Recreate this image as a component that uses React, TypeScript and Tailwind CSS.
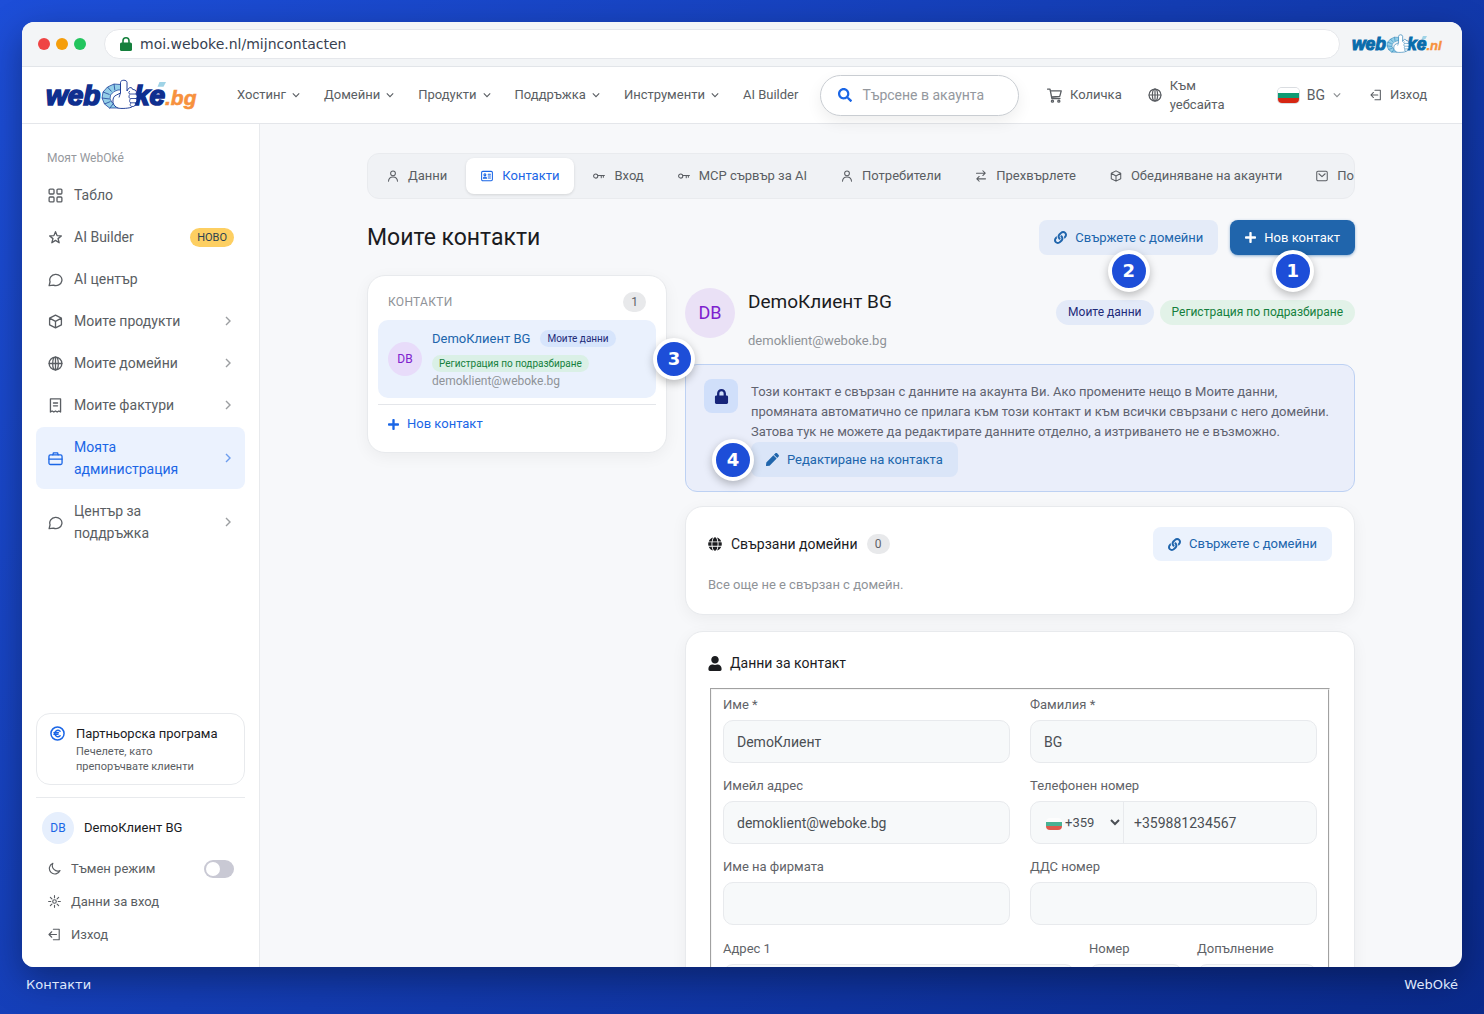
import React from 'react';
import { FaGlobe, FaLink, FaLock, FaPen, FaPlus, FaSearch, FaUser } from 'react-icons/fa';

type IconName =
  | 'grid' | 'star' | 'chat' | 'cube' | 'globe' | 'receipt' | 'briefcase'
  | 'user' | 'card' | 'key' | 'swap' | 'mail' | 'cart' | 'logout' | 'moon' | 'sun' | 'euro';

const shapes: Record<IconName, React.ReactNode> = {
  grid: (
    <>
      <rect x="1.2" y="1.2" width="5.2" height="5.2" rx="1" />
      <rect x="9.6" y="1.2" width="5.2" height="5.2" rx="1" />
      <rect x="1.2" y="9.6" width="5.2" height="5.2" rx="1" />
      <rect x="9.6" y="9.6" width="5.2" height="5.2" rx="1" />
    </>
  ),
  star: <path d="M8 1.8l1.7 4.2 4.5.3-3.5 2.9 1.2 4.4L8 11.1l-3.9 2.5 1.2-4.4L1.8 6.3 6.3 6z" />,
  chat: <path d="M1.2 14.6l1-4.2A6.5 6 0 1 1 5.8 14z" />,
  cube: <path d="M8 1.2l6.3 3.2v7.2L8 14.8l-6.3-3.2V4.4zM1.7 4.4L8 7.9l6.3-3.5M8 7.9v6.9" />,
  globe: (
    <>
      <circle cx="8" cy="8" r="6.8" />
      <ellipse cx="8" cy="8" rx="3" ry="6.8" />
      <path d="M1.2 8h13.6M8 1.2v13.6" />
    </>
  ),
  receipt: <path d="M2.6 1h10.8v14l-1.8-1.2L9.8 15 8 13.8 6.2 15l-1.8-1.2L2.6 15zM5.8 5.3h4.4M5.8 8.3h4.4" />,
  briefcase: (
    <>
      <rect x="1" y="4.2" width="14" height="10.2" rx="1.6" />
      <path d="M5.2 4.1l.6-2.2h4.4l.6 2.2M1 8.6h14" />
    </>
  ),
  user: (
    <>
      <circle cx="8" cy="4.4" r="3.2" />
      <path d="M2 15c.2-3.8 2.4-5.8 6-5.8s5.8 2 6 5.8" />
    </>
  ),
  card: (
    <>
      <rect x=".8" y="1.8" width="14.4" height="12.4" rx="1.6" />
      <circle cx="5.2" cy="6.4" r="1.3" />
      <path d="M3.2 11c0-2.4 4.2-2.4 4.2 0zM9.6 5.6h3M9.6 8h3M9.6 10.6h3" />
    </>
  ),
  key: (
    <>
      <circle cx="3.6" cy="8" r="2.8" />
      <path d="M6.4 7.2h8.8M11 7.2v3M13.8 7.2v2.4" />
    </>
  ),
  swap: <path d="M2 4.2h11.6M10.4 1l3.2 3.2-3.2 3.2M14 11.8H2.4M5.6 8.6l-3.2 3.2L5.6 15" />,
  mail: (
    <>
      <rect x="1" y="1.6" width="14" height="12.8" rx="1.6" />
      <path d="M3.8 5L8 8.8 12.2 5" />
    </>
  ),
  cart: (
    <>
      <path d="M.6 1.2h2.6l2 10h8.6M3.6 3h11.6l-1.6 6-8.8.6" />
      <circle cx="5.8" cy="14" r="1.1" />
      <circle cx="12.6" cy="14" r="1.1" />
    </>
  ),
  logout: <path d="M6.6 1.6h7.2v12.8H6.6M10.4 8H1.4M4.6 4.6L1.2 8l3.4 3.4" />,
  moon: <path d="M6 1.6a6.8 6.8 0 1 0 8.8 8.8A6.6 6.6 0 0 1 6 1.6z" />,
  sun: (
    <>
      <circle cx="8" cy="8" r="2.2" />
      <path d="M8 .8v2.6M8 12.6v2.6M.8 8h2.6M12.6 8h2.6M2.9 2.9l1.9 1.9M11.2 11.2l1.9 1.9M2.9 13.1l1.9-1.9M11.2 4.8l1.9-1.9" />
    </>
  ),
  euro: (
    <>
      <circle cx="8" cy="8" r="7" strokeWidth="1.6" />
      <path d="M10.8 5.6a3.3 3.3 0 1 0 0 4.8M4.2 7.2h4.8M4.2 8.9h4.4" strokeWidth="1.5" />
    </>
  ),
};

function Icon({ name, className }: { name: IconName; className: string }) {
  return (
    <svg
      viewBox="0 0 16 16"
      className={`shrink-0 ${className}`}
      fill="none"
      stroke="currentColor"
      strokeWidth="1.4"
      strokeLinecap="round"
      strokeLinejoin="round"
      aria-hidden="true"
    >
      {shapes[name]}
    </svg>
  );
}

function Chevron({ className }: { className: string }) {
  return (
    <svg viewBox="0 0 8 8" className={`shrink-0 ${className}`} fill="none" stroke="currentColor" strokeWidth="1.1" aria-hidden="true">
      <path d="M.8 2.4L4 5.6l3.2-3.2" />
    </svg>
  );
}

function Logo({ domain, ink, className }: { domain: string; ink: string; className: string }) {
  return (
    <svg viewBox="0 0 152 32" className={className} role="img" aria-label={`WebOké${domain}`}>
      <g fontFamily='"Liberation Sans", Arial, sans-serif' fontWeight="700" fontStyle="italic">
        <text x="0" y="25.5" fontSize="28" fill={ink} stroke={ink} strokeWidth="1.7">web</text>
        <text x="88" y="25.5" fontSize="28" fill={ink} stroke={ink} strokeWidth="1.7">ke</text>
        <text x="119" y="26" fontSize="21" fill="#f7913d" stroke="#f7913d" strokeWidth=".6">{domain}</text>
      </g>
      <path d="M113.500 3h6.500l-2.500 4.800h-6z" fill="#9fd3e6" />
      {/* segmented ring behind the hand */}
      <path
        d="M74.500 5.500L68 5l-6.500 3-4.500 5-1 6 2.500 6 5 4h9l-3-5h-3l-2.500-4 .5-4 3.500-3.500 4-1.500h2.500z"
        fill="#94cfe8"
        stroke={ink}
        strokeWidth=".7"
      />
      <path d="M61.500 8l4 4.500M57 13l6.500 2.500M56 19l7.500 1M58.500 25l6-2.500M63.500 29.500L67 25M68 5l.8 6" stroke={ink} strokeWidth=".7" />
      {/* hand with the index finger up */}
      <path
        d="M74.500 14V3.500C74.500.5 81 .5 81 3.500V12l1.500-2.500c1.500-1.600 4-1 4 .8l2.500.7c1.800.8 1.800 3 .8 4 1.700 1 1.700 3.500.2 4.500 1.300 1.200 1 3.600-.6 4.300.4 2.400-1 4-3 3.700-1.400 2-12.400 2.400-14.400 1.500-2.500-.8-4.500-3-5-5.500-.4-3.500.5-6.500 3.500-7.500z"
        fill="#fff"
        stroke={ink}
        strokeWidth=".9"
      />
      <path
        d="M90 15h-6c-1.600 0-1.600-2.600 0-2.800M90 19.500h-5.500c-1.800 0-2-2.400-.8-4M89.500 23.800h-4.500c-1.600 0-1.800-2.200-.8-3.800M86.500 27.500c-2.500 0-3-2-1.500-3.500M74.500 14l-1.500 4.500"
        fill="none"
        stroke={ink}
        strokeWidth=".8"
      />
    </svg>
  );
}

function Flag({ className }: { className: string }) {
  return (
    <svg viewBox="0 0 21 15" className={className} preserveAspectRatio="none" aria-hidden="true">
      <path fill="#fff" d="M0 0h21v5H0z" />
      <path fill="#0e9b73" d="M0 5h21v5H0z" />
      <path fill="#d62612" d="M0 10h21v5H0z" />
    </svg>
  );
}

function Step({ n, className }: { n: number; className: string }) {
  return (
    <span
      className={`absolute z-10 flex size-[42px] items-center justify-center rounded-full border-4 border-white bg-[#1d4ed8] font-['DejaVu_Sans',sans-serif] text-lg font-bold text-white shadow-[0_3px_8px_rgba(0,0,0,0.25)] ${className}`}
    >
      {n}
    </span>
  );
}

function Count({ children }: { children: React.ReactNode }) {
  return (
    <span className="flex h-5 min-w-[23px] items-center justify-center rounded-full bg-[#e8e9eb] px-2 text-xs text-[#5f6368]">
      {children}
    </span>
  );
}

function Field({ id, label, value, type = 'text' }: { id: string; label: string; value?: string; type?: string }) {
  return (
    <div>
      <label htmlFor={id} className="mb-1.5 block text-[13px] leading-[18px] text-[#5f6368]">{label}</label>
      <input
        id={id}
        type={type}
        defaultValue={value}
        className="block h-[43px] w-full rounded-[10px] border border-[#e8eaed] bg-[#f7f9fa] px-[13px] text-sm text-[#4b4f54]"
      />
    </div>
  );
}

const menu = ['Хостинг', 'Домейни', 'Продукти', 'Поддръжка', 'Инструменти'];

const sidebar: { icon: IconName; label: string; badge?: string; more?: boolean; active?: boolean }[] = [
  { icon: 'grid', label: 'Табло' },
  { icon: 'star', label: 'AI Builder', badge: 'НОВО' },
  { icon: 'chat', label: 'AI център' },
  { icon: 'cube', label: 'Моите продукти', more: true },
  { icon: 'globe', label: 'Моите домейни', more: true },
  { icon: 'receipt', label: 'Моите фактури', more: true },
  { icon: 'briefcase', label: 'Моята администрация', more: true, active: true },
  { icon: 'chat', label: 'Център за поддръжка', more: true },
];

const tabs: { icon: IconName; label: string; active?: boolean }[] = [
  { icon: 'user', label: 'Данни' },
  { icon: 'card', label: 'Контакти', active: true },
  { icon: 'key', label: 'Вход' },
  { icon: 'key', label: 'MCP сървър за AI' },
  { icon: 'user', label: 'Потребители' },
  { icon: 'swap', label: 'Прехвърлете' },
  { icon: 'cube', label: 'Обединяване на акаунти' },
  { icon: 'mail', label: 'По' },
];

function BrowserBar() {
  return (
    <div className="flex h-[45px] shrink-0 items-center border-b border-[#e2e5e9] bg-[#f3f5f7] pl-4 pr-[15px]">
      <div className="flex gap-1.5">
        <span className="size-3 rounded-full bg-[#ef4444]" />
        <span className="size-3 rounded-full bg-[#f59e0b]" />
        <span className="size-3 rounded-full bg-[#22c55e]" />
      </div>
      <div className="ml-[18px] mr-3 flex h-[30px] flex-1 items-center gap-2 rounded-full border border-[#e5e7eb] bg-white pl-[15px] font-['DejaVu_Sans',sans-serif] text-sm text-[#374151]">
        <svg viewBox="0 0 12 14" className="h-3.5 w-3 text-[#15803d]" aria-hidden="true">
          <rect y="5.500" width="12" height="8.500" rx="1.600" fill="currentColor" />
          <path d="M3 6V3.800a3 3 0 0 1 6 0V6" fill="none" stroke="currentColor" strokeWidth="1.600" />
        </svg>
        moi.weboke.nl/mijncontacten
      </div>
      <Logo domain=".nl" ink="#0a6cab" className="h-5 w-[95px]" />
    </div>
  );
}

function Header() {
  return (
    <header className="flex h-[57px] shrink-0 items-center border-b border-[#e4e6ea] bg-white pl-6 pr-[35px] text-[13px] text-[#5a5e63]">
      <a href="#" className="shrink-0">
        <Logo domain=".bg" ink="#0f2f8f" className="h-8 w-[152px]" />
      </a>
      <nav className="ml-[39px] flex shrink-0 gap-6">
        {menu.map((item) => (
          <a key={item} href="#" className="flex items-center gap-1.5">
            {item}
            <Chevron className="size-2" />
          </a>
        ))}
        <a href="#">AI Builder</a>
      </nav>
      <label className="relative z-10 ml-[22px] flex h-[41px] min-w-0 flex-1 items-center gap-2.5 rounded-full border border-[#c9cdd2] bg-white px-[17px] shadow-[0_6px_16px_rgba(0,0,0,0.07)]">
        <FaSearch className="size-3.5 shrink-0 text-[#1a66e6]" />
        <input type="search" placeholder="Търсене в акаунта" aria-label="Търсене в акаунта" className="w-full min-w-0 text-sm outline-none placeholder:text-[#94989e]" />
      </label>
      <div className="ml-7 flex shrink-0 items-center">
        <a href="#" className="flex items-center gap-2">
          <Icon name="cart" className="size-[15px]" />
          Количка
        </a>
        <a href="#" className="ml-[26px] flex items-center gap-2">
          <Icon name="globe" className="size-3.5" />
          <span className="w-[60px] leading-[19px]">Към уебсайта</span>
        </a>
        <button type="button" className="ml-12 flex items-center gap-2 text-sm">
          <Flag className="h-[15px] w-[21px] rounded-sm ring-1 ring-[#dadde1]" />
          BG
          <Chevron className="size-2 opacity-70" />
        </button>
        <a href="#" className="ml-[29px] flex items-center gap-2">
          <Icon name="logout" className="size-3" />
          Изход
        </a>
      </div>
    </header>
  );
}

function Sidebar() {
  return (
    <aside className="flex w-[238px] shrink-0 flex-col border-r border-[#e8eaed] bg-white px-3.5 pb-4 text-[#5a5e63]">
      <p className="mt-6 pl-[11px] text-xs leading-5 text-[#96999e]">Моят WebOké</p>
      <nav className="mt-[7px] flex flex-col gap-0.5">
        {sidebar.map((item) => (
          <a
            key={item.label}
            href="#"
            className={`flex items-center rounded-lg py-[9px] pl-3 pr-[11px] text-sm leading-[22px] ${item.active ? 'bg-[#ebf2fe] text-[#1a66e6]' : ''}`}
          >
            <Icon name={item.icon} className="size-[15px]" />
            <span className="ml-[11px] mr-4 flex-1">{item.label}</span>
            {item.badge && (
              <span className="rounded-full bg-[#fdcf62] px-[7px] text-[11px] leading-[19px] text-[#2c4250]">{item.badge}</span>
            )}
            {item.more && <Chevron className="mr-px size-2.5 -rotate-90 opacity-60" />}
          </a>
        ))}
      </nav>

      <a href="#" className="mt-auto flex gap-[11px] rounded-[14px] border border-[#e8eaed] px-[13px] py-2.5">
        <Icon name="euro" className="mt-0.5 size-[15px] text-[#1a66e6]" />
        <span>
          <span className="block text-[13px] leading-5 text-[#1b1c1f]">Партньорска програма</span>
          <span className="block max-w-[140px] text-[11px] leading-[15px]">Печелете, като препоръчвате клиенти</span>
        </span>
      </a>

      <div className="mt-3 border-t border-[#e8eaed] pt-3.5">
        <div className="flex items-center gap-2.5 pl-1.5 text-[13px] text-[#1b1c1f]">
          <span className="flex size-8 items-center justify-center rounded-full bg-[#e6effd] text-xs text-[#1a66e6]">DB</span>
          DemoКлиент BG
        </div>
        <label className="mt-2 flex h-[33px] items-center gap-2.5 pl-3 pr-[11px] text-[13px]">
          <Icon name="moon" className="size-[13px]" />
          <span className="flex-1">Тъмен режим</span>
          <input
            type="checkbox"
            className="h-[18px] w-[30px] appearance-none rounded-full bg-[#c9c9d4] p-0.5 before:block before:size-3.5 before:rounded-full before:bg-white checked:bg-[#1a66e6] checked:before:ml-3"
          />
        </label>
        <a href="#" className="flex h-[33px] items-center gap-2.5 pl-3 text-[13px]">
          <Icon name="sun" className="size-[13px]" />
          Данни за вход
        </a>
        <a href="#" className="flex h-[33px] items-center gap-2.5 pl-3 text-[13px]">
          <Icon name="logout" className="size-[13px]" />
          Изход
        </a>
      </div>
    </aside>
  );
}

function ContactList() {
  return (
    <section className="relative rounded-[18px] border border-[#e8eaed] bg-white px-2.5 pb-2.5 pt-4 shadow-[0_4px_16px_rgba(0,0,0,0.05)]">
      <div className="flex items-center justify-between px-2.5">
        <h2 className="text-xs tracking-wide text-[#8f9398]">КОНТАКТИ</h2>
        <Count>1</Count>
      </div>
      <div className="relative mt-2 flex h-[78px] items-center gap-2.5 rounded-[10px] bg-[#eaf1fd] px-2.5">
        <span className="flex size-[34px] shrink-0 items-center justify-center rounded-full bg-[#e8dcfa] text-xs text-[#7e22ce]">DB</span>
        <div className="pt-[3px]">
          <div className="flex items-center gap-2.5 text-[13px] leading-[17px] text-[#2065ac]">
            DemoКлиент BG
            <span className="rounded-full bg-[#d7e5fc] px-[7px] text-[10px] text-[#1e2a78]">Моите данни</span>
          </div>
          <span className="mt-2 block w-fit rounded-full bg-[#daf0e6] px-[7px] text-[10px] leading-[17px] text-[#15803d]">
            Регистрация по подразбиране
          </span>
          <p className="text-xs leading-[19px] text-[#8f9398]">demoklient@weboke.bg</p>
        </div>
        <Step n={3} className="-right-[39px] top-[18px]" />
      </div>
      <button type="button" className="mt-1.5 flex w-full items-center gap-2 border-t border-[#e4e6ea] px-2.5 pb-[9px] pt-2.5 text-[13px] leading-[18px] text-[#1a66e6]">
        <FaPlus className="h-[13px] w-[11px]" />
        Нов контакт
      </button>
    </section>
  );
}

function ContactForm() {
  return (
    <section className="mt-4 rounded-[18px] border border-[#e8eaed] bg-white px-[22px] pb-6 pt-5 shadow-[0_4px_16px_rgba(0,0,0,0.05)]">
      <h2 className="flex items-center gap-2 text-sm leading-[22px] text-[#1b1c1f]">
        <FaUser className="h-[15px] w-3.5" />
        Данни за контакт
      </h2>
      <fieldset className="mx-0.5 mt-3.5 border-2 border-[#f5f5f5] px-[11px] pb-4 pt-1.5 [border-style:groove]">
        <div className="grid grid-cols-2 gap-x-5 gap-y-3.5">
          <Field id="first" label="Име *" value="DemoКлиент" />
          <Field id="last" label="Фамилия *" value="BG" />
          <Field id="email" label="Имейл адрес" value="demoklient@weboke.bg" type="email" />
          <div>
            <label htmlFor="phone" className="mb-1.5 block text-[13px] leading-[18px] text-[#5f6368]">Телефонен номер</label>
            <div className="relative flex h-[43px] rounded-[10px] border border-[#e8eaed] bg-[#f7f9fa] text-[#4b4f54]">
              <Flag className="absolute left-[15px] top-4 h-3 w-4 rounded-sm opacity-75" />
              <select aria-label="Код на държавата" className="w-[93px] border-r border-[#e8eaed] pl-[30px] text-[13px]">
                <option>+359</option>
              </select>
              <input id="phone" type="tel" defaultValue="+359881234567" className="min-w-0 flex-1 px-2.5 text-sm" />
            </div>
          </div>
          <Field id="company" label="Име на фирмата" />
          <Field id="vat" label="ДДС номер" />
        </div>
        <div className="mt-[15px] grid grid-cols-[1fr_94px_120px] gap-3.5">
          <Field id="address" label="Адрес 1" />
          <Field id="number" label="Номер" />
          <Field id="suffix" label="Допълнение" />
        </div>
      </fieldset>
    </section>
  );
}

function ContactDetails() {
  return (
    <div className="min-w-0">
      <div className="flex h-[89px] gap-[13px] pt-[13px]">
        <span className="flex size-[50px] items-center justify-center rounded-full bg-[#eae1f6] text-lg text-[#7e22ce]">DB</span>
        <div className="flex-1">
          <h2 className="text-[19px] leading-7 text-[#1b1c1f]">DemoКлиент BG</h2>
          <p className="mt-[15px] text-[13px] leading-5 text-[#8f9398]">demoklient@weboke.bg</p>
        </div>
        <div className="mt-3 flex gap-1.5 self-start text-xs leading-[25px]">
          <span className="rounded-full bg-[#e3eaf8] px-3 text-[#1e2a78]">Моите данни</span>
          <span className="rounded-full bg-[#e2f2e8] px-3 text-[#15803d]">Регистрация по подразбиране</span>
        </div>
      </div>

      <section className="flex gap-[13px] rounded-xl border border-[#bdd1f3] bg-[#eaeefa] px-[18px] py-3.5">
        <span className="flex size-[34px] shrink-0 items-center justify-center rounded-lg bg-[#d0dffa] text-[#16247a]">
          <FaLock className="size-[15px]" />
        </span>
        <div className="pt-[3px]">
          <p className="text-[13px] leading-5 text-[#5f6370]">
            Този контакт е свързан с данните на акаунта Ви. Ако промените нещо в Моите данни, промяната автоматично се
            прилага към този контакт и към всички свързани с него домейни. Затова тук не можете да редактирате данните
            отделно, а изтриването не е възможно.
          </p>
          <a href="#" className="relative flex h-[35px] w-fit items-center gap-2 rounded-lg bg-[#dae5f8] px-[15px] text-[13px] text-[#2065ac]">
            <FaPen className="size-[13px]" />
            Редактиране на контакта
            <Step n={4} className="-left-[39px] -top-[3px]" />
          </a>
        </div>
      </section>

      <section className="mt-3.5 rounded-[18px] border border-[#e8eaed] bg-white px-[22px] pb-[19px] pt-5 shadow-[0_4px_16px_rgba(0,0,0,0.05)]">
        <div className="flex items-center justify-between">
          <h2 className="flex items-center gap-[9px] text-sm text-[#1b1c1f]">
            <FaGlobe className="size-3.5" />
            Свързани домейни
            <Count>0</Count>
          </h2>
          <button type="button" className="flex h-[34px] items-center gap-2 rounded-lg bg-[#ebf2fd] px-[15px] text-[13px] text-[#2065ac]">
            <FaLink className="size-[13px]" />
            Свържете с домейни
          </button>
        </div>
        <p className="mt-3.5 text-[13px] leading-5 text-[#8f9398]">Все още не е свързан с домейн.</p>
      </section>

      <ContactForm />
    </div>
  );
}

function App() {
  return (
    <div className="flex h-screen flex-col bg-[linear-gradient(135deg,#1d4ed8,#0a2a8c)] px-[22px] pt-[22px] font-[Roboto,sans-serif]">
      <div className="flex min-h-0 flex-1 flex-col overflow-hidden rounded-xl bg-[#f7f8fa] shadow-[0_12px_36px_rgba(0,0,0,0.35)]">
        <BrowserBar />
        <Header />
        <div className="flex min-h-0 flex-1">
          <Sidebar />
          <main className="min-w-0 flex-1 overflow-hidden px-6 pt-[29px]">
            <div className="mx-auto max-w-[988px]">
              <nav className="flex gap-1 overflow-hidden rounded-xl border border-[#e9ebee] bg-[#f0f2f5] p-1 text-[13px] text-[#5a5e63]">
                {tabs.map((tab) => (
                  <a
                    key={tab.label}
                    href="#"
                    className={`flex h-9 shrink-0 items-center gap-[9px] rounded-lg px-[15px] ${tab.active ? 'bg-white text-[#1a66e6] shadow-[0_1px_3px_rgba(0,0,0,0.12)]' : ''}`}
                  >
                    <Icon name={tab.icon} className="size-3" />
                    {tab.label}
                  </a>
                ))}
              </nav>

              <div className="mt-[21px] flex items-center justify-between">
                <h1 className="text-[23px] leading-[35px] text-[#1b1c1f]">Моите контакти</h1>
                <div className="flex gap-3 text-[13px]">
                  <button type="button" className="relative flex h-[35px] items-center gap-2 rounded-lg bg-[#e4ebf8] px-[15px] text-[#2065ac]">
                    <FaLink className="size-[13px]" />
                    Свържете с домейни
                    <Step n={2} className="left-1/2 top-[30px] -translate-x-1/2" />
                  </button>
                  <button type="button" className="relative flex h-[35px] items-center gap-2 rounded-lg bg-[#2065ac] px-[15px] text-white shadow-[0_1px_3px_rgba(32,101,172,0.5)]">
                    <FaPlus className="h-[13px] w-[11px]" />
                    Нов контакт
                    <Step n={1} className="left-1/2 top-[30px] -translate-x-1/2" />
                  </button>
                </div>
              </div>

              <div className="mt-5 grid grid-cols-[300px_1fr] items-start gap-[18px]">
                <ContactList />
                <ContactDetails />
              </div>
            </div>
          </main>
        </div>
      </div>
      <footer className="flex h-[47px] shrink-0 justify-between px-1 pt-2 font-['DejaVu_Sans',sans-serif] text-[13px] leading-5 text-[#dfe7fb]">
        <span>Контакти</span>
        <span>WebOké</span>
      </footer>
    </div>
  );
}

export default App;
